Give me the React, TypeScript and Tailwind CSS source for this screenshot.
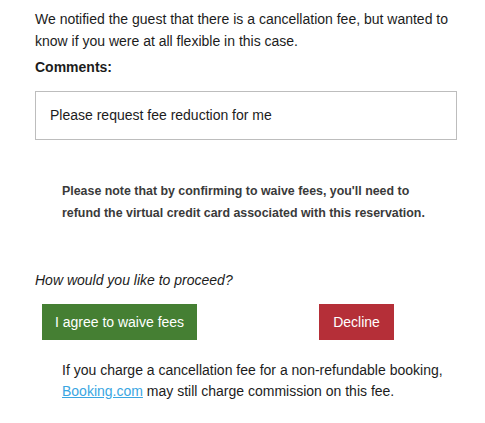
export default function App() {
  return (
    <div className="min-h-screen bg-white font-['Liberation_Sans',Arial,sans-serif] text-[#1c1c1c]">
      <div className="w-[422px] ml-[35px] pt-[8px]">
        <p className="text-[14px] leading-[22px]">
          We notified the guest that there is a cancellation fee, but wanted to know if you were at all flexible in this case.
        </p>

        <h3 className="mt-[4px] text-[14px] leading-[22px] font-bold">Comments:</h3>

        <div className="mt-[13px] h-[49px] border border-[#bdbdbd] flex items-center px-[14px] text-[14px]">
          Please request fee reduction for me
        </div>

        <p className="mt-[40px] ml-[27px] pr-[28px] text-[12.4px] leading-[22px] font-bold text-[#3a3a3a]">
          Please note that by confirming to waive fees, you'll need to refund the virtual credit card associated with this reservation.
        </p>

        <p className="mt-[45px] text-[14px] leading-[22px] italic">How would you like to proceed?</p>

        <div className="mt-[13px] flex">
          <button className="ml-[7px] w-[155px] h-[36px] bg-[#457f33] text-white text-[14px]">
            I agree to waive fees
          </button>
          <button className="ml-[122px] w-[75px] h-[36px] bg-[#b52f38] text-white text-[14px]">
            Decline
          </button>
        </div>

        <p className="mt-[20px] ml-[27px] text-[14px] leading-[21px]">
          If you charge a cancellation fee for a non-refundable booking,{' '}
          <a href="#" className="text-[#3aa6e2] underline">Booking.com</a> may still charge commission on this fee.
        </p>
      </div>
    </div>
  )
}
